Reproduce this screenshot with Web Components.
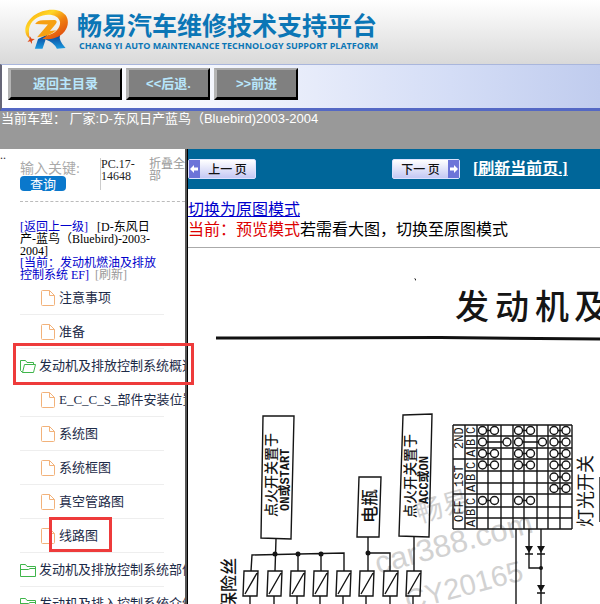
<!DOCTYPE html>
<html lang="zh-CN">
<head>
<meta charset="utf-8">
<title>畅易汽车维修技术支持平台</title>
<style>
html, body {
    height: 100%;
    margin: 0;
}
body {
    display: flex;
    flex-direction: column;
    overflow: hidden;
    background: #fff;
    font-family: "Liberation Serif", "Noto Sans CJK SC", serif;
}
.panes {
    flex: 1;
    min-height: 0;
    display: flex;
}
</style>
</head>
<body>
<cy-header>
    <span slot="title">畅易汽车维修技术支持平台</span>
    <span slot="subtitle">CHANG YI AUTO MAINTENANCE TECHNOLOGY SUPPORT PLATFORM</span>
</cy-header>
<cy-toolbar>
    <cy-button size="wide">返回主目录</cy-button>
    <cy-button>&lt;&lt;后退.</cy-button>
    <cy-button>&gt;&gt;前进</cy-button>
</cy-toolbar>
<cy-status>当前车型： 厂家:D-东风日产蓝鸟（Bluebird)2003-2004</cy-status>
<div class="panes">
    <cy-sidebar>
        <cy-tree-item kind="file">注意事项</cy-tree-item>
        <cy-tree-item kind="file">准备</cy-tree-item>
        <cy-tree-item kind="open" marked>发动机及排放控制系统概述</cy-tree-item>
        <cy-tree-item kind="file">E_C_C_S_部件安装位置</cy-tree-item>
        <cy-tree-item kind="file">系统图</cy-tree-item>
        <cy-tree-item kind="file">系统框图</cy-tree-item>
        <cy-tree-item kind="file">真空管路图</cy-tree-item>
        <cy-tree-item kind="file" marked>线路图</cy-tree-item>
        <cy-tree-item kind="folder">发动机及排放控制系统部件</cy-tree-item>
        <cy-tree-item kind="folder">发动机及排入控制系统介绍</cy-tree-item>
    </cy-sidebar>
    <cy-viewer>
        <cy-diagram></cy-diagram>
    </cy-viewer>
</div>

<script>
function attach(el, html) {
    const t = document.createElement('template');
    t.innerHTML = html;
    el.attachShadow({ mode: 'open' }).appendChild(t.content.cloneNode(true));
}

class CyHeader extends HTMLElement {
    constructor() {
        super();
        attach(this, `<style>
:host {
    display: flex;
    flex: none;
    align-items: flex-start;
    gap: 6px;
    height: 64px;
    padding: 7px 0 0 23px;
    box-sizing: border-box;
    background: linear-gradient(#fff, #d9d9d9);
    color: #0b76b6;
    white-space: nowrap;
}
svg {
    width: 48px;
    height: 45px;
}
.title {
    font: bold 25px/34px "Noto Sans CJK SC", sans-serif;
}
.subtitle {
    font: bold 9px/10px "Open Sans", "Liberation Sans", sans-serif;
    padding-left: 2px;
}
</style>
<svg viewBox="70 20 150 140" role="img" aria-label="logo">
    <defs>
        <linearGradient id="ring" x1="0" y1="0" x2="1" y2="1">
            <stop offset="0" stop-color="#f79a00"></stop>
            <stop offset=".35" stop-color="#ffd728"></stop>
            <stop offset=".6" stop-color="#f08010"></stop>
            <stop offset="1" stop-color="#d83a10"></stop>
        </linearGradient>
        <linearGradient id="leg" x1="0" y1="0" x2="0" y2="1">
            <stop offset="0" stop-color="#0a3f94"></stop>
            <stop offset="1" stop-color="#1a9ae0"></stop>
        </linearGradient>
    </defs>
    <path fill="url(#leg)" d="M117 120 L146 106 L131 150 L107 150 Z M142 116 L186 106 Q180 124 203 148 L176 150 Q166 130 142 122 Z"></path>
    <path fill="url(#ring)" d="M92 120 C68 104 74 70 103 47 C134 24 183 20 203 45 C220 68 206 106 171 116 C158 121 142 121 130 120 L146 108 C170 104 186 86 186 69 C184 46 156 40 132 46 C98 54 80 82 92 120 Z"></path>
    <path fill="#f6a012" d="M108 73 Q114 62 132 61 L170 60 Q180 64 171 74 L154 95 L174 92 Q152 112 114 114 L148 74 Z"></path>
    <path fill="#e04a18" d="M91 110 L97 119 L107 120 L98 126 L98 135 L92 127 L84 129 L90 121 Z"></path>
</svg>
<div><div class="title"><slot name="title"></slot></div>
<div class="subtitle"><slot name="subtitle"></slot></div></div>`);
    }
}

class CyToolbar extends HTMLElement {
    constructor() {
        super();
        attach(this, `<style>
:host {
    display: flex;
    flex: none;
    gap: 4px;
    height: 47px;
    padding: 3px 0 0 6px;
    box-sizing: border-box;
    border-top: 1px solid #a9b6dc;
    border-bottom: 3px solid #5468c4;
    border-left: 2px solid #667;
    background: linear-gradient(90deg, #fff, #f4f6fd 35%, #d4ddf6 75%, #c0ccee);
}
</style><slot></slot>`);
    }
}

class CyButton extends HTMLElement {
    constructor() {
        super();
        attach(this, `<style>
:host {
    display: block;
    width: 84px;
}
:host([size="wide"]) {
    width: 114px;
}
button {
    width: 100%;
    height: 32px;
    padding: 0;
    background: #808080;
    border: solid;
    border-width: 2px 2px 3px 3px;
    border-color: #a8a8a8 #000 #000 #b4b4b4;
    color: #b8e6fb;
    font: bold 13px/20px "Liberation Sans", "Noto Sans CJK SC", sans-serif;
    cursor: pointer;
}
</style><button type="button"><slot></slot></button>`);
    }
}

class CyStatus extends HTMLElement {
    constructor() {
        super();
        attach(this, `<style>
:host {
    display: block;
    flex: none;
    height: 38px;
    padding-left: 1px;
    background: #999;
    color: #fff;
    font: 13px/16px "Liberation Sans", "Noto Sans CJK SC", sans-serif;
    white-space: nowrap;
}
</style><slot></slot>`);
    }
}

class CySidebar extends HTMLElement {
    constructor() {
        super();
        attach(this, `<style>
:host {
    display: flex;
    flex: none;
    width: 185px;
    border-right: 2px solid #555;
    font-size: 12px;
    line-height: 12px;
}
.dots {
    width: 20px;
    flex: none;
    font-size: 12px;
    color: #333;
}
.body {
    flex: 1;
    min-width: 0;
}
a {
    color: #00c;
    text-decoration: none;
}
.top {
    display: flex;
    height: 53px;
    box-sizing: border-box;
    padding-top: 9px;
    border-bottom: 1px dashed #bbb;
}
.search {
    width: 80px;
    display: flex;
    flex-direction: column;
    align-items: flex-start;
    padding-top: 3px;
}
input {
    width: 64px;
    height: 15px;
    padding: 0;
    border: 0;
    background: none;
    font: 14px/15px "Liberation Serif", "Noto Sans CJK SC", serif;
}
input::placeholder {
    color: #aaa;
}
.search button {
    width: 46px;
    height: 15px;
    padding: 0;
    border: 0;
    border-radius: 4px;
    background: #0a78cc;
    color: #fff;
    font: 13px/15px "Noto Sans CJK SC", sans-serif;
}
.code {
    width: 48px;
    height: 32px;
    border-left: 1px solid #ccc;
    color: #222;
    font-size: 12px;
}
.fold, .grey {
    color: #999;
}
.path {
    width: 140px;
    padding: 19px 0 0;
    white-space: nowrap;
}
</style>
<div class="dots">..</div>
<div class="body">
    <div class="top">
        <div class="search"><input type="text" aria-label="输入关键字" placeholder="输入关键:"><button type="button">查询</button></div>
        <div class="code">PC.17-<br>14648</div>
        <a class="fold" href="#">折叠全<br>部</a>
    </div>
    <div class="path"><a href="#">[返回上一级]</a> &nbsp; [D-东风日<br>产-蓝鸟（Bluebird)-2003-<br>2004]<br><a href="#">[当前：发动机燃油及排放<br>控制系统 EF]</a> &nbsp;<a class="grey" href="#">[刷新]</a></div>
    <slot></slot>
</div>`);
    }
}

const icons = {
    file: '<svg width="14" height="16" viewBox="0 0 14 16" fill="none" stroke="#f2b27a"><path d="M.5 1.5 Q.5 .5 1.5 .5 H8.5 L13.5 5.5 V14.5 Q13.5 15.5 12.5 15.5 H1.5 Q.5 15.5 .5 14.5 Z M8.5 .5 V5.5 H13.5"></path></svg>',
    open: '<svg width="16" height="14" viewBox="0 0 16 14" fill="none" stroke="#3fb54a"><path d="M2.5 13.5 L.5 11.5 V1.5 H5.5 L7 3.5 H13.5 V5.5 M2.5 13.5 L4.5 5.5 H15.5 L13.5 13.5 Z"></path></svg>',
    folder: '<svg width="16" height="14" viewBox="0 0 16 14" fill="none" stroke="#3fb54a"><path d="M.5 13.5 V1.5 H5.5 L7 3.5 H15.5 V13.5 Z M.5 6.5 H8.5 L10 5.5 H15.5"></path></svg>'
};

class CyTreeItem extends HTMLElement {
    constructor() {
        super();
        const kind = this.getAttribute('kind');
        attach(this, `<style>
:host {
    display: block;
    position: relative;
    width: 144px;
    height: 34px;
    box-sizing: border-box;
    border-bottom: 1px solid #eee;
}
a {
    display: flex;
    align-items: center;
    gap: 3px;
    width: 165px;
    height: 33px;
    box-sizing: border-box;
    overflow: hidden;
    color: #1d2b48;
    font-size: 13px;
    line-height: 20px;
    text-decoration: none;
    white-space: nowrap;
}
:host([kind="file"]) a {
    gap: 4px;
    padding-left: 21px;
}
svg {
    flex: none;
}
/* red marker laid over the row */
.mark {
    display: none;
    position: absolute;
    z-index: 1;
    box-sizing: border-box;
    border: 3px solid #ee3b3b;
    pointer-events: none;
}
:host([marked]) .mark {
    display: block;
}
:host([kind="open"]) .mark {
    left: -7px;
    top: -6px;
    width: 181px;
    height: 42px;
}
:host([kind="file"]) .mark {
    left: 29px;
    top: -2px;
    width: 63px;
    height: 35px;
}
</style><a href="#">${icons[kind]}<span><slot></slot></span></a><div class="mark"></div>`);
    }
}

class CyViewer extends HTMLElement {
    constructor() {
        super();
        attach(this, `<style>
:host {
    display: block;
    flex: 1;
    min-width: 0;
    overflow: hidden;
    border-left: 1px solid #000;
    font-size: 16px;
    line-height: 20px;
}
nav {
    display: flex;
    align-items: center;
    height: 40px;
    background: #069;
    white-space: nowrap;
}
nav button {
    display: flex;
    align-items: center;
    width: 68px;
    height: 20px;
    padding: 0;
    border: 1px solid #dde2ff;
    border-radius: 2px;
    background: linear-gradient(#fff, #c4c8f4);
    color: #111;
    font: 500 12px/18px "Noto Sans CJK SC", sans-serif;
}
nav button span {
    flex: 1;
}
nav svg {
    background: #6c74d8;
}
.prev {
    margin-right: 136px;
}
.reload {
    margin-left: 13px;
    color: #fff;
    font-weight: bold;
    text-decoration-thickness: 1px;
}
.mode {
    padding-top: 11px;
    height: 47px;
    border-bottom: 1px solid #aaa;
    white-space: nowrap;
}
.mode a {
    color: #00c;
}
.now {
    color: #d00;
}
</style>
<nav>
    <button class="prev" type="button"><svg width="11" height="18" viewBox="0 0 11 18"><path fill="#fff" d="M1 9 L5 5 V7.500 H9 V10.500 H5 V13 Z"></path></svg><span>上一 页</span></button>
    <button type="button"><span>下一 页</span><svg width="11" height="18" viewBox="0 0 11 18"><path fill="#fff" d="M10 9 L6 5 V7.500 H2 V10.500 H6 V13 Z"></path></svg></button>
    <a class="reload" href="#">[刷新当前页.]</a>
</nav>
<div class="mode"><a href="#">切换为原图模式</a><br><span class="now">当前：预览模式</span>若需看大图，切换至原图模式</div>
<slot></slot>`);
    }
}

// light switch contact table
const cols = [453, 465, 477, 488, 501, 513, 524, 537, 548, 560, 572];
const rows = [425, 436, 448, 459, 471, 483, 494, 507, 518, 529];
const contacts = [
    [[0, 1], [3, 4], [6, 7]],
    [[0, 2], [3, 5], [6, 7]],
    [[0, 1], [3, 4], [6, 7]],
    [[0, 1], [3, 4], [6, 7]],
    [[6, 7]],
    [[6, 7]],
    [[0, 1], [3, 4]]
];

function switchTable() {
    let d = '', out = '';
    cols.forEach(x => d += `M${x} 425 V529 `);
    rows.forEach((y, i) => d += `M${i % 3 ? 465 : 453} ${y} H572 `);
    const mid = (a, i) => (a[i] + a[i + 1]) / 2;
    contacts.forEach((row, r) => row.forEach(([a, b]) => {
        const y = mid(rows, r), x1 = mid(cols, a + 2), x2 = mid(cols, b + 2);
        d += `M${x1 + 4} ${y} H${x2 - 4} `;
        out += `<circle cx="${x1}" cy="${y}" r="4"></circle><circle cx="${x2}" cy="${y}" r="4"></circle>`;
    }));
    return `<path d="${d}"></path>${out}`;
}

function switchLabels() {
    const up = (x, y, s) => `<text transform="translate(${x} ${y}) rotate(-90)">${s}</text>`;
    return ['C', 'B', 'A', 'C', 'B', 'A', 'C', 'B', 'A'].map((s, i) => up(475, rows[i + 1] - 2, s)).join('')
        + up(463, 449, '2ND') + up(463, 487, '1ST') + up(463, 522, 'OFF');
}

function fuses() {
    return [243, 267, 290, 313, 336, 359, 383, 406].map(x =>
        `<path d="M${x + 1} 571 H${x + 15} L${x + 14} 596 H${x} Z M${x + 2} 594 L${x + 14} 573 M${x + 7} 596 V606"></path>`).join('');
}

class CyDiagram extends HTMLElement {
    constructor() {
        super();
        attach(this, `<style>
:host {
    display: block;
}
svg {
    display: block;
    font-family: "Liberation Sans", "Noto Sans CJK SC", sans-serif;
}
.ln {
    fill: none;
    stroke: #151515;
    stroke-width: 1.4;
}
.mono {
    font-family: "Liberation Mono", "Noto Sans CJK SC", monospace;
    font-weight: bold;
}
</style>
<svg width="412" height="356" viewBox="188 248 412 356" fill="#151515">
    <g fill="#d2d2d2" font-size="27">
        <text transform="translate(419 523) rotate(-16)">畅易</text>
        <text transform="translate(378 574) rotate(-15)" font-size="31">car388.com</text>
        <text transform="translate(408 611) rotate(-15)" font-size="29">CY20165</text>
    </g>
    <path d="M414 278 l2 1 v2 z"></path>
    <text x="455 495 535 574" y="319" font-size="34" font-weight="500">发动机及</text>
    <path d="M216 338 L440 337.500 L600 339" fill="none" stroke="#111" stroke-width="3"></path>
    <g class="ln">
        <path d="M263 416 H294 L291 539 L261 538 Z M359 477 H381 L379 537 H357 Z M403 415 L432 414 L429 537 L399 536 Z"></path>
        <path d="M276 539 L275 571 M251 571 L252 555 L344 553 V571 M298 554 V571 M321 554 V571"></path>
        <path d="M368 537 V571 M368 553 H390 V571 M414 537 V571"></path>
        <path d="M516 529 V606 M529 529 V568 H541 M541 529 V606"></path>
        <path d="M525 554 H533 M537 554 H545 M537 593 H545"></path>
        <path d="M600 477 V522"></path>
        ${fuses()}
        ${switchTable()}
    </g>
    <path d="M525 546 H533 L529 553 Z M537 546 H545 L541 553 Z M537 585 H545 L541 592 Z"></path>
    <circle cx="275" cy="554" r="2.500"></circle>
    <circle cx="298" cy="554" r="2.500"></circle>
    <circle cx="321" cy="554" r="2.500"></circle>
    <circle cx="368" cy="553" r="2.500"></circle>
    <circle cx="541" cy="568" r="2"></circle>
    <g font-size="14" font-weight="500">
        <text transform="translate(276 517) rotate(-90)">点火开关置于</text>
        <text transform="translate(415 518) rotate(-90)">点火开关置于</text>
    </g>
    <g class="mono" font-size="12">
        <text transform="translate(289 511) rotate(-90)">ON或START</text>
        <text transform="translate(428 504) rotate(-90)">ACC或ON</text>
    </g>
    <text transform="translate(376 523) rotate(-90)" font-size="17" font-weight="500">电瓶</text>
    <text transform="translate(235 609) rotate(-90)" font-size="17" font-weight="500">保险丝</text>
    <text transform="translate(592 527) rotate(-90)" font-size="18">灯光开关</text>
    <g font-family="Liberation Mono, monospace" font-size="12">${switchLabels()}</g>
</svg>`);
    }
}

customElements.define('cy-header', CyHeader);
customElements.define('cy-toolbar', CyToolbar);
customElements.define('cy-button', CyButton);
customElements.define('cy-status', CyStatus);
customElements.define('cy-sidebar', CySidebar);
customElements.define('cy-tree-item', CyTreeItem);
customElements.define('cy-viewer', CyViewer);
customElements.define('cy-diagram', CyDiagram);
</script>
</body>
</html>
